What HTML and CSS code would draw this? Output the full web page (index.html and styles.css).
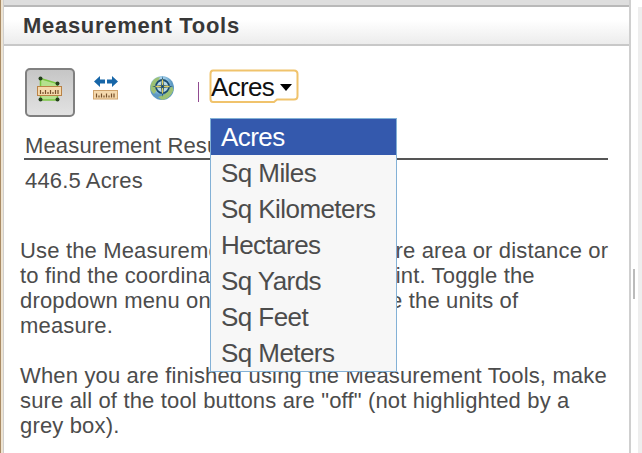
FILE: index.html
```html
<!DOCTYPE html>
<html lang="en">
<head>
<meta charset="utf-8">
<title>Measurement Tools</title>
<link rel="stylesheet" href="styles.css">
</head>
<body>
<div class="app">
  <div class="edge"></div>
  <main class="panel">
    <div class="strip"></div>
    <h1 class="title"><span>Measurement Tools</span></h1>
    <div class="toolbar">
      <button class="tool active" aria-label="Area">
        <svg width="28" height="28" viewBox="0 0 28 28">
          <path d="M3.500 2.500 20.500 7.500v16.500H3.500z" fill="#b5e18e" stroke="#79c543" stroke-width="1.500"/>
          <g fill="#24401c"><circle cx="3.500" cy="2.500" r="2"/><circle cx="20.500" cy="7.500" r="2"/><circle cx="20.500" cy="23.500" r="2"/><circle cx="3.500" cy="23.500" r="2"/></g>
          <rect x=".5" y="10.500" width="24" height="9" fill="#f5d9ad" stroke="#b98246"/>
          <path d="M3.500 18v-4M6 18v-2M8.500 18v-4M11 18v-2M13.500 18v-4M16 18v-2M18.500 18v-4M21 18v-4" stroke="#76502b" stroke-width="1.200"/>
        </svg>
      </button>
      <button class="tool distance" aria-label="Distance">
        <svg width="28" height="28" viewBox="0 0 28 28">
          <path d="M1 5.500 7 0v3.500h5v4H7V11zM25 5.500 19 0v3.500h-5v4h5V11z" fill="#1766a8"/>
          <rect x=".5" y="14.500" width="24" height="8.500" fill="#f5d9ad" stroke="#d0a36c"/>
          <path d="M3.500 21.500v-4M6 21.500v-2M8.500 21.500v-4M11 21.500v-2M13.500 21.500v-4M16 21.500v-2M18.500 21.500v-4M21 21.500v-4" stroke="#76502b" stroke-width="1.200"/>
        </svg>
      </button>
      <button class="tool location" aria-label="Location">
        <svg width="26" height="26" viewBox="0 0 26 26">
          <defs><radialGradient id="globe" cx=".4" cy=".3"><stop offset="0" stop-color="#e2f3fb"/><stop offset=".65" stop-color="#91c3e2"/><stop offset="1" stop-color="#5d99c3"/></radialGradient></defs>
          <circle cx="13" cy="13" r="12" fill="url(#globe)"/>
          <path d="M2 9Q5 2 11 2l-2 5-3 3 2 5-3 4Q0 15 2 9zM9 22l6-2 8-9 1.500 4Q21 24 13 25z" fill="#9cc174"/>
          <circle cx="13.500" cy="11.500" r="6.500" fill="#b9d9e6" stroke="#194b70" stroke-width="1.800"/>
          <path d="M13.500 1l1.500 9 9 1.500-9 1.500-1.500 9-1.500-9-9-1.500 9-1.500z" fill="#194b70"/>
          <path d="M13.500 4.500v14M6.500 11.500h14" stroke="#e1cf61" stroke-width="1.300"/>
          <circle cx="13.500" cy="11.500" r="1.500" fill="#194b70"/>
        </svg>
      </button>
      <span class="separator"></span>
      <div class="select">
        <svg class="outline" width="90" height="35" viewBox="0 0 90 35"><path d="M4 1.500h81q3.500 0 3.500 3.500v22q0 3.500-3.500 3.500H68l-3 2.500H4Q1.500 33 1.500 30V5Q1.500 1.500 4 1.500z" fill="#fff" stroke="#f0c36c" stroke-width="2"/></svg>
        <span class="value">Acres</span>
        <svg class="caret" width="12" height="7" viewBox="0 0 12 7"><path d="M0 0h12L6 7z" fill="#000"/></svg>
        <ul class="menu">
          <li class="selected">Acres</li>
          <li>Sq Miles</li>
          <li>Sq Kilometers</li>
          <li>Hectares</li>
          <li>Sq Yards</li>
          <li>Sq Feet</li>
          <li>Sq Meters</li>
        </ul>
      </div>
    </div>
    <section class="result">
      <h2>Measurement Result</h2>
      <p>446.5 Acres</p>
    </section>
    <section class="help">
      <p>Use the Measurement Tools to measure area or distance or<br>to find the coordinates of a specific point. Toggle the<br>dropdown menu on the right to change the units of<br>measure.</p>
      <p>When you are finished using the Measurement Tools, make<br>sure all of the tool buttons are "off" (not highlighted by a<br>grey box).</p>
    </section>
  </main>
  <div class="splitter"><span class="grip"></span></div>
  <div class="neighbor"></div>
</div>
</body>
</html>
```
FILE: styles.css
```css
* { box-sizing: border-box; }
body { margin: 0; background: #fff; color: #4c4c4c; font-family: "Liberation Sans", Arial, sans-serif; }
h1, h2, p, ul { margin: 0; padding: 0; }
.app { display: flex; width: 642px; height: 453px; overflow: hidden; }
.edge { width: 4px; flex: none; background: linear-gradient(90deg, #a98b65 0 1px, #eee4d2 1px 3px, #cfcfcf 3px); }
.panel { width: 627px; flex: none; border-right: 2px solid #cfcfcf; }
.strip { height: 7px; background: #dedede; border-bottom: 2px solid #b9b9b9; }
.title { display: flex; align-items: center; height: 39px; padding-left: 19px; border-bottom: 2px solid #c8c8c8; background: linear-gradient(#fff 35%, #ececec); color: #383838; font-size: 22px; line-height: 37px; letter-spacing: .7px; }
.toolbar { display: flex; align-items: flex-start; height: 73px; padding: 22px 0 0 21px; }
.tool { display: flex; align-items: flex-start; flex: none; margin: 0; padding: 0; border: 0; background: none; }
.tool svg { display: block; flex: none; }
.active { width: 50px; height: 49px; padding: 6px 0 0 10px; border: 2px solid #808080; border-radius: 5px; background: linear-gradient(#c6c6c6, #e2e2e2); }
.distance { width: 28px; margin: 8px 0 0 18px; }
.location { width: 26px; margin: 7px 0 0 28px; }
.separator { width: 1px; height: 20px; margin: 14px 0 0 23px; background: #914b91; }
.select { position: relative; display: flex; width: 90px; height: 35px; margin: 1px 0 0 10px; padding-left: 2px; color: #111; font-size: 26px; line-height: 36px; }
.outline { position: absolute; left: 0; top: 0; }
.value { position: relative; letter-spacing: -.7px; }
.caret { position: relative; margin: 15px 0 0 6px; }
.menu { position: absolute; z-index: 2; left: 1px; top: 49px; width: 187px; height: 254px; border: 1px solid #83b1d6; background: #f7f7f7; list-style: none; color: #4c4c4c; font-size: 26px; letter-spacing: -.57px; }
.menu li { height: 36px; padding-left: 10px; line-height: 36px; }
.menu .selected { color: #fff; background: #3459ad; }
.result { margin: 14px 21px 0 20px; font-size: 22px; letter-spacing: .15px; }
.result h2 { height: 27px; border-bottom: 2px solid #555; font-size: 22px; font-weight: 400; line-height: 25px; padding-left: 1px; }
.result p { padding-left: 1px; line-height: 41px; }
.help { margin: 37px 0 0 16px; font-size: 22px; line-height: 25px; letter-spacing: .16px; white-space: nowrap; }
.help p + p { margin-top: 25px; }
.splitter { width: 7px; flex: none; }
.grip { display: block; width: 2px; height: 30px; margin: 269px 0 0 2px; background: #bbb; }
.neighbor { width: 4px; flex: none; margin-top: 7px; background: #eee; }
```
